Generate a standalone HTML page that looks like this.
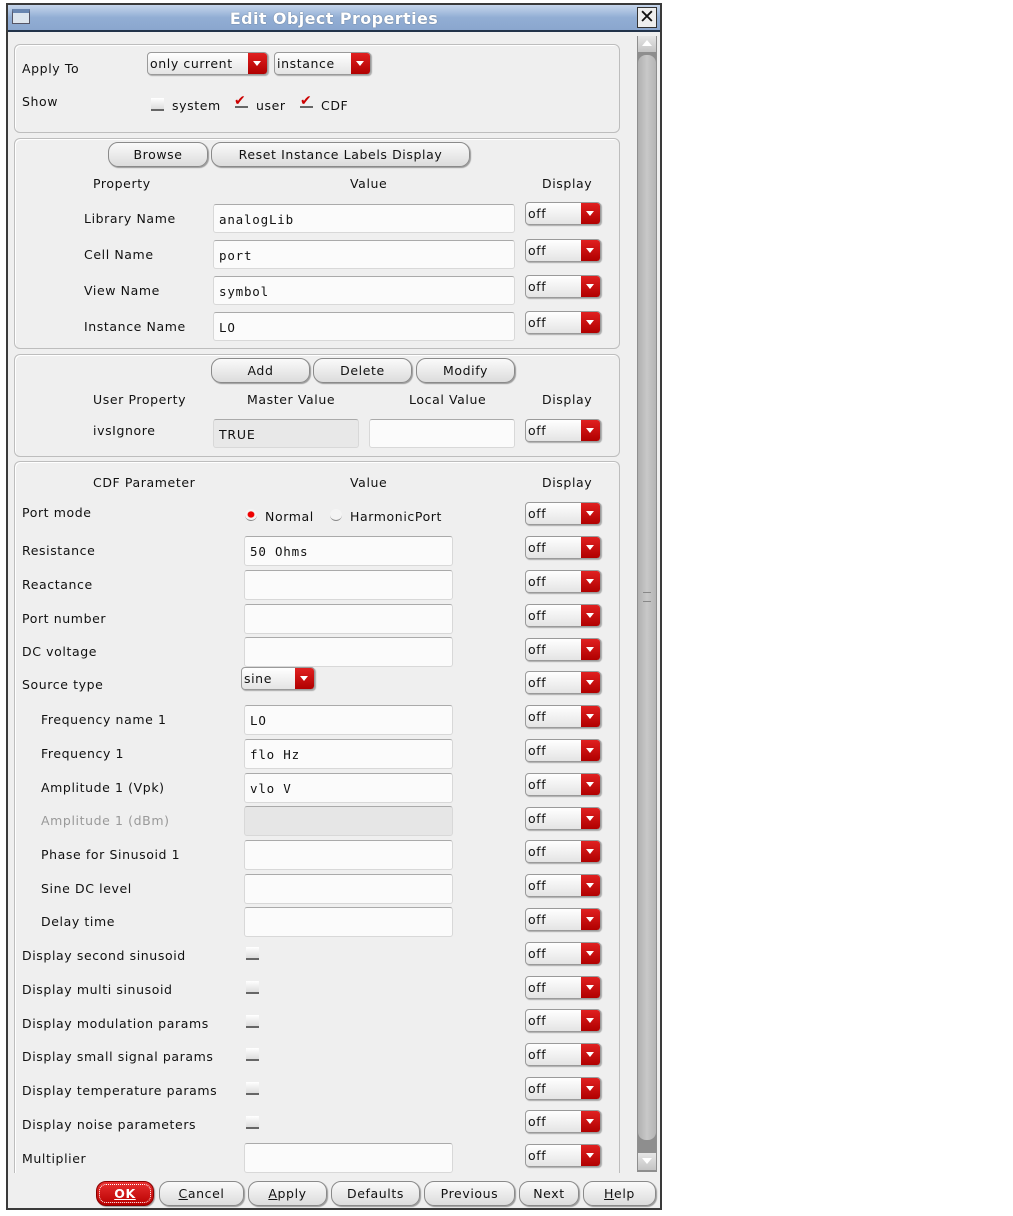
<!DOCTYPE html>
<html><head><meta charset="utf-8">
<style>
*{box-sizing:border-box;margin:0;padding:0}
body{width:1013px;height:1216px;background:#fff;position:relative;overflow:hidden;font-family:"DejaVu Sans","Liberation Sans",sans-serif;font-size:12.5px;color:#111;letter-spacing:0.6px}
.a{position:absolute}
#win{left:6px;top:3px;width:656px;height:1207px;border:2px solid #3a3a3a;background:#efefef}
#title{left:8px;top:5px;width:652px;height:27px;background:linear-gradient(#c6d6ec,#92aed4 50%,#8aa6ce);border-bottom:2px solid #22334a}
#title span{position:absolute;left:0;right:0;top:4px;text-align:center;color:#fff;font-weight:bold;font-size:16px;letter-spacing:0.4px;text-shadow:0 0 1px #456}
.grp{border:1px solid #bdbdbd;border-radius:6px;box-shadow:inset 1px 1px 0 #fff}
.lb{position:absolute;white-space:nowrap}
.fld{position:absolute;background:#fbfbfb;border:1px solid #d8d8d8;border-top-color:#aaa;border-radius:3px;font-family:"DejaVu Sans Mono","Liberation Mono",monospace;font-size:12.5px;padding:7px 0 0 5px;letter-spacing:0.8px}
.cb{position:absolute;height:23px;border:1px solid #9a9a9a;border-radius:4px;background:linear-gradient(#fff,#e4e4e4);box-shadow:1px 1px 1px #aaa;overflow:hidden;font-size:12.5px;padding:3px 0 0 2px;white-space:nowrap}
.cb i{position:absolute;right:0;top:0;bottom:0;width:19px;background:linear-gradient(#e02020,#b00000)}
.cb i:after{content:"";position:absolute;left:5px;top:8px;border-left:4px solid transparent;border-right:4px solid transparent;border-top:5px solid #fff}
.btn{position:absolute;height:25px;border:1px solid #8a8a8a;border-radius:10px;background:linear-gradient(#fafafa,#dcdcdc);text-align:center;padding-top:4px;font-size:12.5px;box-shadow:1px 1px 1px #999;white-space:nowrap}
.ck{position:absolute;width:13px;height:13px;background:linear-gradient(#fff,#ddd);border-bottom:2px solid #666;}
.hd{position:absolute;font-size:12.5px;white-space:nowrap}
</style></head><body>
<div id="win" class="a"></div>
<div id="title" class="a"><div class="a" style="left:4px;top:4px;width:18px;height:15px;background:#dde5ee;border:1px solid #556;border-top:4px solid #6a86b0"></div><span>Edit Object Properties</span><div class="a" style="left:629px;top:2px;width:20px;height:21px;background:#eee;border:1px solid #333;font-size:19px;line-height:18px;text-align:center;color:#111;letter-spacing:0">✕</div></div>

<div class="a" style="left:637px;top:36px;width:20px;height:1136px;background:#8e8e8e"></div>
<div class="a" style="left:638px;top:36px;width:18px;height:16px;background:linear-gradient(#e6e6e6,#c4c4c4)"><div class="a" style="left:4px;top:4px;border-left:5px solid transparent;border-right:5px solid transparent;border-bottom:6px solid #fff"></div></div>
<div class="a" style="left:638px;top:55px;width:18px;height:1085px;background:linear-gradient(90deg,#b0b0b0,#c8c8c8 50%,#b4b4b4);border-radius:8px"></div>
<div class="a" style="left:643px;top:592px;width:8px;height:10px;border-top:1px solid #888;border-bottom:1px solid #888"></div>
<div class="a" style="left:638px;top:1153px;width:18px;height:17px;background:linear-gradient(#e6e6e6,#c4c4c4)"><div class="a" style="left:4px;top:5px;border-left:5px solid transparent;border-right:5px solid transparent;border-top:6px solid #fff"></div></div>

<div class="a grp" style="left:14px;top:44px;width:606px;height:89px"></div>
<div class="lb" style="left:22px;top:61px">Apply To</div>
<div class="cb" style="left:147px;top:52px;width:121px">only current<i></i></div>
<div class="cb" style="left:274px;top:52px;width:97px">instance<i></i></div>
<div class="lb" style="left:22px;top:94px">Show</div>
<div class="ck" style="left:151px;top:98px"></div><div class="lb" style="left:172px;top:98px">system</div>
<div class="lb" style="left:234px;top:93px;color:#c00;font-size:14px">✔</div><div class="ck" style="left:235px;top:106px;height:2px;width:13px;background:#666"></div><div class="lb" style="left:256px;top:98px">user</div>
<div class="lb" style="left:300px;top:93px;color:#c00;font-size:14px">✔</div><div class="ck" style="left:300px;top:106px;height:2px;width:13px;background:#666"></div><div class="lb" style="left:321px;top:98px">CDF</div>

<div class="a grp" style="left:14px;top:138px;width:606px;height:211px"></div>
<div class="btn" style="left:108px;top:142px;width:100px">Browse</div>
<div class="btn" style="left:211px;top:142px;width:259px">Reset Instance Labels Display</div>
<div class="hd" style="left:93px;top:176px">Property</div>
<div class="hd" style="left:350px;top:176px">Value</div>
<div class="hd" style="left:542px;top:176px">Display</div>
<div class="lb" style="left:84px;top:211px">Library Name</div><div class="fld" style="left:213px;top:204px;width:302px;height:29px">analogLib</div><div class="cb" style="left:525px;top:202px;width:76px">off<i></i></div>
<div class="lb" style="left:84px;top:247px">Cell Name</div><div class="fld" style="left:213px;top:240px;width:302px;height:29px">port</div><div class="cb" style="left:525px;top:239px;width:76px">off<i></i></div>
<div class="lb" style="left:84px;top:283px">View Name</div><div class="fld" style="left:213px;top:276px;width:302px;height:29px">symbol</div><div class="cb" style="left:525px;top:275px;width:76px">off<i></i></div>
<div class="lb" style="left:84px;top:319px">Instance Name</div><div class="fld" style="left:213px;top:312px;width:302px;height:29px">LO</div><div class="cb" style="left:525px;top:311px;width:76px">off<i></i></div>

<div class="a grp" style="left:14px;top:354px;width:606px;height:103px"></div>
<div class="btn" style="left:211px;top:358px;width:99px">Add</div>
<div class="btn" style="left:313px;top:358px;width:99px">Delete</div>
<div class="btn" style="left:416px;top:358px;width:99px">Modify</div>
<div class="hd" style="left:93px;top:392px">User Property</div>
<div class="hd" style="left:247px;top:392px">Master Value</div>
<div class="hd" style="left:409px;top:392px">Local Value</div>
<div class="hd" style="left:542px;top:392px">Display</div>
<div class="lb" style="left:93px;top:423px">ivsIgnore</div>
<div class="fld" style="left:213px;top:419px;width:146px;height:29px;background:#e8e8e8;font-family:'DejaVu Sans',sans-serif">TRUE</div>
<div class="fld" style="left:369px;top:419px;width:146px;height:29px"></div>
<div class="cb" style="left:525px;top:419px;width:76px">off<i></i></div>

<div class="a grp" style="left:14px;top:461px;width:606px;height:720px;border-bottom:none"></div>
<div class="hd" style="left:93px;top:475px">CDF Parameter</div>
<div class="hd" style="left:350px;top:475px">Value</div>
<div class="hd" style="left:542px;top:475px">Display</div>

<div class="lb" style="left:22px;top:505px">Port mode</div>
<div class="a" style="left:245px;top:509px;width:12px;height:12px;border-radius:50%;background:radial-gradient(#e00 35%,#f4f4f4 45%);border-bottom:1px solid #888"></div>
<div class="lb" style="left:265px;top:509px">Normal</div>
<div class="a" style="left:330px;top:509px;width:12px;height:12px;border-radius:50%;background:#f4f4f4;border-bottom:1px solid #888"></div>
<div class="lb" style="left:350px;top:509px">HarmonicPort</div>
<div class="cb" style="left:525px;top:502px;width:76px">off<i></i></div>

<div class="lb" style="left:22px;top:543px">Resistance</div><div class="fld" style="left:244px;top:536px;width:209px;height:30px">50 Ohms</div><div class="cb" style="left:525px;top:536px;width:76px">off<i></i></div>
<div class="lb" style="left:22px;top:577px">Reactance</div><div class="fld" style="left:244px;top:570px;width:209px;height:30px"></div><div class="cb" style="left:525px;top:570px;width:76px">off<i></i></div>
<div class="lb" style="left:22px;top:611px">Port number</div><div class="fld" style="left:244px;top:604px;width:209px;height:30px"></div><div class="cb" style="left:525px;top:604px;width:76px">off<i></i></div>
<div class="lb" style="left:22px;top:644px">DC voltage</div><div class="fld" style="left:244px;top:637px;width:209px;height:30px"></div><div class="cb" style="left:525px;top:638px;width:76px">off<i></i></div>
<div class="lb" style="left:22px;top:677px">Source type</div><div class="cb" style="left:241px;top:667px;width:74px">sine<i></i></div><div class="cb" style="left:525px;top:671px;width:76px">off<i></i></div>
<div class="lb" style="left:41px;top:712px">Frequency name 1</div><div class="fld" style="left:244px;top:705px;width:209px;height:30px">LO</div><div class="cb" style="left:525px;top:705px;width:76px">off<i></i></div>
<div class="lb" style="left:41px;top:746px">Frequency 1</div><div class="fld" style="left:244px;top:739px;width:209px;height:30px">flo Hz</div><div class="cb" style="left:525px;top:739px;width:76px">off<i></i></div>
<div class="lb" style="left:41px;top:780px">Amplitude 1 (Vpk)</div><div class="fld" style="left:244px;top:773px;width:209px;height:30px">vlo V</div><div class="cb" style="left:525px;top:773px;width:76px">off<i></i></div>
<div class="lb" style="left:41px;top:813px;color:#999">Amplitude 1 (dBm)</div><div class="fld" style="left:244px;top:806px;width:209px;height:30px;background:#e6e6e6"></div><div class="cb" style="left:525px;top:807px;width:76px">off<i></i></div>
<div class="lb" style="left:41px;top:847px">Phase for Sinusoid 1</div><div class="fld" style="left:244px;top:840px;width:209px;height:30px"></div><div class="cb" style="left:525px;top:840px;width:76px">off<i></i></div>
<div class="lb" style="left:41px;top:881px">Sine DC level</div><div class="fld" style="left:244px;top:874px;width:209px;height:30px"></div><div class="cb" style="left:525px;top:874px;width:76px">off<i></i></div>
<div class="lb" style="left:41px;top:914px">Delay time</div><div class="fld" style="left:244px;top:907px;width:209px;height:30px"></div><div class="cb" style="left:525px;top:908px;width:76px">off<i></i></div>
<div class="lb" style="left:22px;top:948px">Display second sinusoid</div><div class="ck" style="left:246px;top:947px"></div><div class="cb" style="left:525px;top:942px;width:76px">off<i></i></div>
<div class="lb" style="left:22px;top:982px">Display multi sinusoid</div><div class="ck" style="left:246px;top:981px"></div><div class="cb" style="left:525px;top:976px;width:76px">off<i></i></div>
<div class="lb" style="left:22px;top:1016px">Display modulation params</div><div class="ck" style="left:246px;top:1015px"></div><div class="cb" style="left:525px;top:1009px;width:76px">off<i></i></div>
<div class="lb" style="left:22px;top:1049px">Display small signal params</div><div class="ck" style="left:246px;top:1048px"></div><div class="cb" style="left:525px;top:1043px;width:76px">off<i></i></div>
<div class="lb" style="left:22px;top:1083px">Display temperature params</div><div class="ck" style="left:246px;top:1082px"></div><div class="cb" style="left:525px;top:1077px;width:76px">off<i></i></div>
<div class="lb" style="left:22px;top:1117px">Display noise parameters</div><div class="ck" style="left:246px;top:1116px"></div><div class="cb" style="left:525px;top:1110px;width:76px">off<i></i></div>
<div class="lb" style="left:22px;top:1151px">Multiplier</div><div class="fld" style="left:244px;top:1143px;width:209px;height:30px"></div><div class="cb" style="left:525px;top:1144px;width:76px">off<i></i></div>

<div class="a" style="left:10px;top:1173px;width:650px;height:35px;background:#efefef"></div>
<div class="btn" style="left:96px;top:1181px;width:58px;background:linear-gradient(#e83030,#b80000);color:#fff;font-weight:bold;border-color:#800;outline:1px dotted #fff;outline-offset:-4px"><u>OK</u></div>
<div class="btn" style="left:159px;top:1181px;width:85px"><u>C</u>ancel</div>
<div class="btn" style="left:248px;top:1181px;width:79px"><u>A</u>pply</div>
<div class="btn" style="left:331px;top:1181px;width:89px">Defaults</div>
<div class="btn" style="left:424px;top:1181px;width:91px">Previous</div>
<div class="btn" style="left:519px;top:1181px;width:60px">Next</div>
<div class="btn" style="left:583px;top:1181px;width:73px"><u>H</u>elp</div>
</body></html>
